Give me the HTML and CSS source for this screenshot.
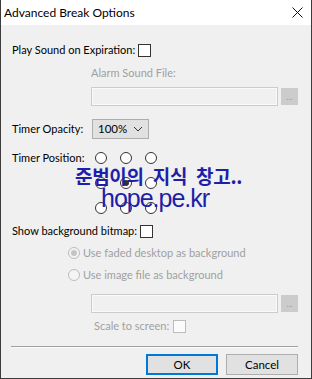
FILE: index.html
```html
<!DOCTYPE html>
<html lang="en">
<head>
    <meta charset="UTF-8">
    <title>Advanced Break Options</title>
    <link rel="stylesheet" href="styles.css">
</head>
<body>
    <div class="window">
        <div class="titlebar">
            <span class="title">Advanced Break Options</span>
            <svg class="close" width="11" height="11" viewBox="0 0 11 11"><path d="M0.5 0.5 L10.5 10.5 M10.5 0.5 L0.5 10.5" stroke="#111" stroke-width="1"/></svg>
        </div>

        <div class="content">
            <div class="row row-sound">
                <span class="label">Play Sound on Expiration:</span>
                <span class="check"></span>
            </div>

            <div class="row row-alarm indent disabled">Alarm Sound File:</div>

            <div class="row file-row indent">
                <div class="file-box"></div>
                <div class="browse">...</div>
            </div>

            <div class="row row-opacity">
                <span class="label wide">Timer Opacity:</span>
                <div class="select">
                    <span>100%</span>
                    <svg width="10" height="6" viewBox="0 0 10 6"><path d="M1 1 L5 5 L9 1" fill="none" stroke="#333" stroke-width="1"/></svg>
                </div>
            </div>

            <div class="row row-position">
                <span class="label">Timer Position:</span>
                <div class="pos-grid">
                    <span class="radio"></span>
                    <span class="radio"></span>
                    <span class="radio"></span>
                    <span class="radio"></span>
                    <span class="radio on"></span>
                    <span class="radio"></span>
                    <span class="radio"></span>
                    <span class="radio"></span>
                    <span class="radio"></span>
                </div>
            </div>

            <div class="row row-bitmap">
                <span class="label">Show background bitmap:</span>
                <span class="check"></span>
            </div>

            <div class="row row-radio1 disabled">
                <span class="radio off on"></span>
                <span>Use faded desktop as background</span>
            </div>

            <div class="row row-radio2 disabled">
                <span class="radio off"></span>
                <span>Use image file as background</span>
            </div>

            <div class="row file-row file-row2 indent">
                <div class="file-box"></div>
                <div class="browse">...</div>
            </div>

            <div class="row row-scale disabled">
                <span>Scale to screen:</span>
                <span class="check off"></span>
            </div>

            <div class="separator"></div>

            <div class="buttons">
                <button class="btn btn-ok">OK</button>
                <button class="btn">Cancel</button>
            </div>
        </div>

        <!-- watermark stamped over the dialog -->
        <div class="watermark">
            <div class="wm-ko">준범이의 지식 창고..</div>
            <div class="wm-url">hope.pe.kr</div>
        </div>
    </div>
</body>
</html>
```

FILE: styles.css
```css
body {
    margin: 0;
    padding: 0;
    background: #ffffff;
    font-family: Lato, "Noto Sans", sans-serif;
    font-size: 11px;
    color: #000;
}

.window {
    position: relative;
    width: 312px;
    height: 379px;
    box-sizing: border-box;
    border: 1px solid #3c3c3c;
    border-top: none;
    background: #f0f0f0;
    overflow: hidden;
}

.titlebar {
    height: 25px;
    background: #ffffff;
    display: flex;
    align-items: center;
    justify-content: space-between;
    padding: 0 8px 0 3px;
}

.title {
    font-size: 12px;
    color: #000;
}

.close {
    display: block;
}

.content {
    padding: 0 13px 0 11px;
}

.row {
    display: flex;
    align-items: center;
    height: 14px;
    line-height: 14px;
    white-space: nowrap;
}

.label {
    margin-right: 3px;
}

.label.wide {
    width: 80px;
    margin-right: 0;
}

.indent {
    padding-left: 79px;
}

.disabled {
    color: #a0a0a0;
}

.check {
    width: 11px;
    height: 11px;
    border: 1px solid #333;
    background: #fff;
    display: inline-block;
}

.check.off {
    border-color: #bcbcbc;
    background: #fbfbfb;
}

.row-sound { margin-top: 18px; }
.row-alarm { margin-top: 9px; }

.file-row {
    margin-top: 7px;
    height: 19px;
}

.file-box {
    width: 185px;
    height: 17px;
    border: 1px solid #cccccc;
    box-shadow: inset 0 0 0 1px #fafafa;
    background: #f0f0f0;
}

.browse {
    width: 17px;
    height: 17px;
    margin-left: 3px;
    background: #cccccc;
    color: #a0a0a0;
    font-size: 9px;
    line-height: 18px;
    text-align: center;
}

.row-opacity {
    margin-top: 13px;
    height: 20px;
}

.select {
    width: 45px;
    height: 18px;
    border: 1px solid #adadad;
    background: #e1e1e1;
    display: flex;
    align-items: center;
    justify-content: space-between;
    padding: 0 5px;
    font-size: 11.5px;
}

.row-position {
    margin-top: 13px;
    height: 62px;
    align-items: flex-start;
}

.row-position .label {
    width: 83px;
    margin-right: 0;
    margin-top: -1px;
}

.pos-grid {
    display: grid;
    grid-template-columns: 12px 12px 12px;
    column-gap: 13px;
    row-gap: 13px;
}

.radio {
    width: 10px;
    height: 10px;
    border: 1px solid #333;
    border-radius: 50%;
    background: #fff;
    display: inline-flex;
    align-items: center;
    justify-content: center;
}

.radio.on::after {
    content: "";
    width: 6px;
    height: 6px;
    border-radius: 50%;
    background: #333;
}

.radio.off {
    border-color: #bcbcbc;
    background: #f4f4f4;
    margin-right: 3px;
}

.radio.off.on::after {
    background: #c4c4c4;
}

.row-bitmap { margin-top: 10px; }

.row-radio1 {
    margin-top: 8px;
    padding-left: 56px;
}

.row-radio2 {
    margin-top: 8px;
    padding-left: 56px;
}

.file-row2 { margin-top: 12px; }

.row-scale {
    margin-top: 6px;
    padding-left: 82px;
}

.row-scale span:first-child {
    margin-right: 4px;
}

.separator {
    margin-top: 13px;
    margin-left: -1px;
    height: 1px;
    background: #a0a0a0;
    border-bottom: 1px solid #fafafa;
}

.buttons {
    display: flex;
    justify-content: flex-end;
    gap: 8px;
    margin-top: 6px;
}

.btn {
    width: 72px;
    height: 21px;
    border: 1px solid #adadad;
    background: #e1e1e1;
    font-family: Lato, "Noto Sans", sans-serif;
    font-size: 11.5px;
    color: #000;
    padding: 0;
}

.btn-ok {
    border: 2px solid #0078d7;
}

.watermark {
    position: absolute;
    left: 74px;
    top: 164px;
    color: #1e1ea8;
    pointer-events: none;
}

.wm-ko {
    font-family: "Noto Sans CJK KR", sans-serif;
    font-weight: 700;
    font-size: 19px;
    line-height: 24px;
    letter-spacing: -0.3px;
    word-spacing: 5px;
}

.wm-url {
    font-family: "Liberation Sans", sans-serif;
    font-size: 25px;
    line-height: 24px;
    margin-top: -2px;
    margin-left: 26px;
    letter-spacing: -1px;
}
```
